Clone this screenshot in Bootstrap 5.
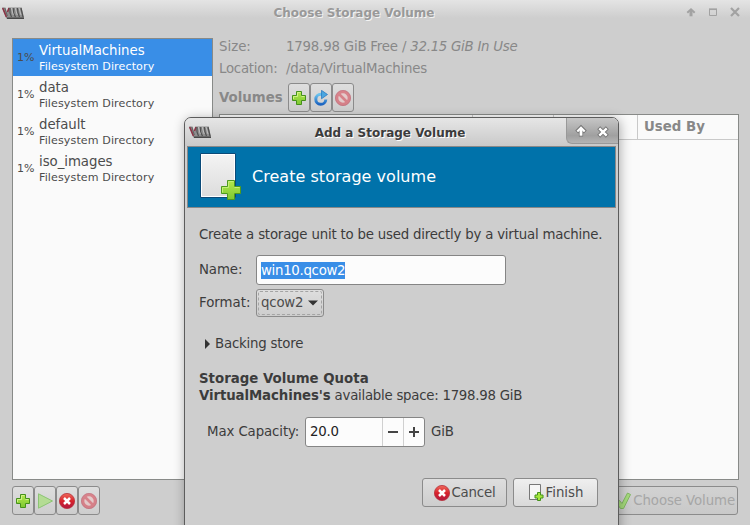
<!DOCTYPE html>
<html lang="en">
<head>
<meta charset="utf-8">
<title>Choose Storage Volume</title>
<meta name="viewport" content="width=device-width, initial-scale=1">
<link href="https://cdn.jsdelivr.net/npm/bootstrap@5.3.0/dist/css/bootstrap.min.css" rel="stylesheet">
<style>
body{font-family:"DejaVu Sans",sans-serif;font-size:13.333px;line-height:16px;background:#cecece;color:#3c3c3c;width:750px;height:525px;overflow:hidden;position:relative;white-space:nowrap}
svg{display:block;flex:none}
.main-win{height:525px;color:#888}
.main-title{height:26px;background:linear-gradient(#e4e4e4,#cecece 18px);color:#999;text-shadow:1px 1px 0 #f4f4f4}
.title-text{font-weight:bold;font-size:12px}
.main-title .title-text{padding-right:4px}
.dlg-title .title-text{padding:2px 0 0 3px}
.workspace{padding:12px 11px 0 12px;height:455px;gap:6px}
.pool-box{width:201px;border:1px solid #888a88;background:#fafafa;color:#4c4c4c;flex:none;height:442px}
.pool-box .pool-item{height:37px;padding:0 0 0 4px;border:0;border-radius:0;background:none;color:inherit}
.pool-box .pool-item.active{background:#398ee7;color:#fff;margin:0}
.pct{font-size:11px;width:22px;color:#4c4c4c}
.pool-sub{font-size:11.1px;line-height:14px;letter-spacing:.1px}
.pool-item .pool-name{line-height:18px;letter-spacing:-.05px}
.info-col{padding-top:1px}
.info-row{margin-bottom:6px}
.info-key{width:67px;flex:none}
.vol-label{width:69px}
.t1{letter-spacing:-.1px}
.t2{letter-spacing:-.2px}
.t3{letter-spacing:-.26px}
.tool-btn,.ui-btn{border:1px solid #8b8b8b;border-radius:3px;background:linear-gradient(#dedede,#cdcdcd);padding:0;color:#4c4c4c}
.tool-btn{width:22px;height:29px}
.vol-table{border:1px solid #888a88;background:#fafafa;height:366px;margin-top:2px}
.vol-head{height:25px;border-bottom:1px solid #c9c9c9}
.vol-head div{border-right:1px solid #c9c9c9;flex:none}
.col-a{width:253px}.col-b{width:81px}.col-c{width:84px}
.vol-head .last-col{border:0;padding-left:6px;line-height:24px;font-weight:bold}
.foot{padding:5px 12px 0 12px}
.ui-btn{height:29px;font-size:13.333px;line-height:16px}
.choose{width:138px;color:#a6a6a6;padding-right:2px;background:linear-gradient(#d2d2d2,#c9c9c9)}
.choose svg{margin-right:1px}
.dialog-win{position:absolute;left:184px;top:117px;width:435px;height:420px;border:1px solid #5c5c5c;border-radius:7px 7px 0 0;background:#cecece;box-shadow:1px 2px 12px rgba(0,0,0,.32)}
.dlg-title{height:28px;background:linear-gradient(#e6e6e6,#c9c9c9);border-radius:6px 6px 0 0;text-shadow:1px 1px 0 #fff;padding-left:4px}
.dlg-ctl{width:52px;height:26px;background:linear-gradient(#c6c6c6,#a0a0a0 70%,#b4b4b4);border:1px solid #999;border-width:0 0 1px 1px;border-radius:0 6px 0 6px}
.banner{height:62px;margin:0 2px;border:1px solid #888;background:#0072aa;color:#fff;font-size:16px;padding-left:10px}
.banner span{letter-spacing:.03px}
.dlg-body{padding:19px 14px 0 14px}
.field-key{width:57px;flex:none}
.row-name{margin-top:12px}
.row-format{margin-top:4px}
.row-backing{margin:19px 0 0 6px}
.row-cap{margin:13px 0 0 8px}
.cap-key{width:98px}
.unit{margin-left:6px}
.entry{border:1px solid #858585;border-radius:3px;background:#fcfcfc;height:30px;padding:0 4px}
.name-entry{width:250px}
.sel{background:#398ee7;color:#fff;line-height:17px;letter-spacing:-.3px}
.format{width:68px;height:28px;padding:1px}
.format .inner{border:1px dashed #a4a4a4;height:100%;width:100%;padding:0 3px 0 2px;border-radius:2px}
.quota{line-height:17px;margin-top:18px}
.spin{width:120px;padding:0 0 0 4px;color:#222}
.spin-btn{width:21px;height:28px;border-left:1px solid #d0d0d0}
.dlg-foot{gap:6px;margin-top:31px;padding-right:6px}
.dlg-foot .ui-btn{width:85px}
.dlg-foot span{margin-left:2px}
.dlg-foot .finish{background:linear-gradient(#efefef,#d9d9d9)}
</style>
<script src="https://cdn.jsdelivr.net/npm/bootstrap@5.3.0/dist/js/bootstrap.bundle.min.js"></script>
</head>
<body>
<svg width="0" height="0" class="position-absolute">
<defs>
<linearGradient id="gG" x1="0" y1="0" x2="0" y2="1"><stop offset="0" stop-color="#b4e84c"/><stop offset="1" stop-color="#7cc832"/></linearGradient>
<linearGradient id="gR" x1="0" y1="0" x2="0" y2="1"><stop offset="0" stop-color="#ee6a5c"/><stop offset=".5" stop-color="#d8232c"/><stop offset="1" stop-color="#b01840"/></linearGradient>
<linearGradient id="gP" x1="0" y1="0" x2="0" y2="1"><stop offset="0" stop-color="#f4f4f4"/><stop offset="1" stop-color="#dcdcdc"/></linearGradient>
<linearGradient id="gB" x1="0" y1="0" x2="0" y2="1"><stop offset="0" stop-color="#6cc4ee"/><stop offset="1" stop-color="#1c64c0"/></linearGradient>
<symbol id="plus" viewBox="0 0 16 16"><path d="M5.500 1.500h5v4h4v5h-4v4h-5v-4h-4v-5h4z" fill="url(#gG)" stroke="#45901c"/><path d="M6.500 6.500v-4h3M2.500 9V6.500h4M10.500 6.500h3" fill="none" stroke="#d4f48c" stroke-width=".9"/></symbol>
<symbol id="stop" viewBox="0 0 16 16"><circle cx="8" cy="8" r="7.600" fill="url(#gR)" stroke="#b8303a" stroke-width=".8"/><path d="M5 5l6 6M11 5l-6 6" stroke="#fff" stroke-width="2.500"/></symbol>
<symbol id="ban" viewBox="0 0 16 16"><g opacity=".5"><circle cx="8" cy="8" r="6.200" fill="#f2c0c0" stroke="#d83040" stroke-width="3"/><path d="M4 4l8 8" stroke="#d83040" stroke-width="2.600"/><circle cx="8" cy="8" r="7.600" fill="none" stroke="#b01830" stroke-width=".8"/></g></symbol>
<symbol id="vmm" viewBox="0 0 22 12"><path d="M4 9.500h18V12H5z" fill="#484848"/><path d="M0 .5h3.500L5 5.500L6.500.5h13l2.500 10H4z" fill="#8e8e8e"/><path d="M.7 1L4.400 10M7 1L5.500 5" fill="none" stroke="#8c3446" stroke-width="1.600"/><path d="M2.800 1l2.600 8" stroke="#555" stroke-width=".8"/><path d="M8 1v5l1.500 4M11.800 1l-.3 5l2 4M15.500 1l.5 5l1.500 4M19 1l2 9" fill="none" stroke="#505050" stroke-width="1.200"/><path d="M9.300 1l2 7M13.200 1l2 7M17 1l2 7" stroke="#c4c4c4" stroke-width=".9"/></symbol>
</defs>
</svg>

<main class="main-win">
  <header class="main-title d-flex align-items-center">
    <svg width="24" height="12" viewBox="-2 0 24 12"><use href="#vmm" width="22" height="12"/></svg>
    <span class="title-text flex-grow-1 text-center">Choose Storage Volume</span>
    <svg width="62" height="26" viewBox="688 0 62 26" overflow="visible" fill="none" stroke="#a2a2a2"><path d="M687.300 12.800L691 9.300l3.700 3.500" stroke-width="2"/><path d="M691 10v6.300" stroke-width="3"/><path d="M709.500 9v6.500h7V9"/><path d="M709 9.200h8" stroke-width="1.700"/><path d="M731 8l8 8M739 8l-8 8" stroke-width="2.200"/></svg>
  </header>

  <section class="workspace d-flex">
    <div class="pool-box list-group rounded-0">
      <div class="list-group-item pool-item active d-flex align-items-center"><span class="pct">1%</span><div><div class="pool-name">VirtualMachines</div><div class="pool-sub">Filesystem Directory</div></div></div>
      <div class="list-group-item pool-item d-flex align-items-center"><span class="pct">1%</span><div><div class="pool-name">data</div><div class="pool-sub">Filesystem Directory</div></div></div>
      <div class="list-group-item pool-item d-flex align-items-center"><span class="pct">1%</span><div><div class="pool-name">default</div><div class="pool-sub">Filesystem Directory</div></div></div>
      <div class="list-group-item pool-item d-flex align-items-center"><span class="pct">1%</span><div><div class="pool-name">iso_images</div><div class="pool-sub">Filesystem Directory</div></div></div>
    </div>
    <div class="info-col flex-grow-1">
      <div class="info-row d-flex"><span class="info-key">Size:</span><span class="t2">1798.98 GiB Free / <em class="t3">32.15 GiB In Use</em></span></div>
      <div class="info-row d-flex"><span class="info-key t3">Location:</span><span class="t2">/data/VirtualMachines</span></div>
      <div class="d-flex align-items-center">
        <b class="vol-label">Volumes</b>
        <button class="tool-btn d-flex align-items-center justify-content-center"><svg width="16" height="16"><use href="#plus"/></svg></button>
        <button class="tool-btn d-flex align-items-center justify-content-center"><svg width="16" height="16" viewBox="0 0 16 16"><path d="M12.800 9.500A5 5 0 1 1 8 4.300H9.500" fill="none" stroke="url(#gB)" stroke-width="3"/><path d="M8.500 .3L14.500 4.500L8.500 8.800Z" fill="#4aa6e0" stroke="#2272bc" stroke-width=".7"/></svg></button>
        <button class="tool-btn d-flex align-items-center justify-content-center"><svg width="16" height="16"><use href="#ban"/></svg></button>
      </div>
      <div class="vol-table">
        <div class="vol-head d-flex"><div class="col-a"></div><div class="col-b"></div><div class="col-c"></div><div class="last-col">Used By</div></div>
      </div>
    </div>
  </section>

  <footer class="foot d-flex">
    <button class="tool-btn d-flex align-items-center justify-content-center"><svg width="16" height="16"><use href="#plus"/></svg></button>
    <button class="tool-btn d-flex align-items-center justify-content-center"><svg width="16" height="16" viewBox="0 0 16 16"><path d="M1.500 .8L15.500 8L1.500 15.200Z" fill="#b4dc94" stroke="#8cc474"/></svg></button>
    <button class="tool-btn d-flex align-items-center justify-content-center"><svg width="16" height="16"><use href="#stop"/></svg></button>
    <button class="tool-btn d-flex align-items-center justify-content-center"><svg width="16" height="16"><use href="#ban"/></svg></button>
    <button class="ui-btn choose ms-auto d-flex align-items-center justify-content-end"><svg width="17" height="18" viewBox="0 0 17 18"><path d="M1.500 11L4.500 8.500L7 11.500L12.500 1L15.500 2.500L8.500 16.500H5.500Z" fill="#a6dc7c" stroke="#84b864"/></svg><span class="t1">Choose Volume</span></button>
  </footer>
</main>

<section class="dialog-win">
  <header class="dlg-title d-flex">
    <svg class="align-self-center" width="22" height="12"><use href="#vmm"/></svg>
    <span class="title-text flex-grow-1 text-center align-self-center">Add a Storage Volume</span>
    <div class="dlg-ctl"><svg width="51" height="25" viewBox="0 0 51 25" fill="none"><path d="M9.700 14L14 9.700l4.300 4.300M14 10v8.500" stroke="#747474" stroke-width="4.200"/><path d="M10.300 13.500L14 9.800l3.700 3.700" stroke="#fff" stroke-width="2.200"/><path d="M14 10v7.700" stroke="#fff" stroke-width="2.800"/><path d="M31.700 9.700l8.600 8.600M40.300 9.700l-8.600 8.600" stroke="#747474" stroke-width="4.200"/><path d="M32.300 10.300l7.400 7.400M39.700 10.300l-7.400 7.400" stroke="#fff" stroke-width="2.400"/></svg></div>
  </header>
  <div class="banner d-flex align-items-center">
    <svg width="54" height="60" viewBox="198 147 54 60"><path d="M200.500 153.500h35v44h-35z" fill="url(#gP)" stroke="#0a4a78"/><path d="M201.500 154.500h33v42h-33z" fill="none" stroke="#fff"/><path d="M227.500 180.500h7v6h6v7h-6v6h-7v-6h-6v-7h6z" fill="url(#gG)" stroke="#4e9a1e"/><path d="M228.500 187.500V181.500h5M222.500 192.500V187.500h6M234.500 187.500h5" fill="none" stroke="#c4f078"/></svg>
    <span>Create storage volume</span>
  </div>
  <div class="dlg-body">
    <div class="t2">Create a storage unit to be used directly by a virtual machine.</div>
    <div class="row-name d-flex align-items-center"><span class="field-key t1">Name:</span><div class="entry name-entry d-flex align-items-center"><span class="sel">win10.qcow2</span></div></div>
    <div class="row-format d-flex align-items-center"><span class="field-key">Format:</span><button class="ui-btn format"><span class="inner d-flex align-items-center justify-content-between"><span class="t2">qcow2</span><svg width="10" height="6"><path d="M0 .5h10L5 5.500z" fill="#333"/></svg></span></button></div>
    <div class="row-backing d-flex align-items-center"><svg width="10" height="10"><path d="M0 0l5 5l-5 5z" fill="#333"/></svg><span class="t2">Backing store</span></div>
    <div class="quota"><b>Storage Volume Quota</b><br><b class="t1">VirtualMachines's</b><span class="t3"> available space: 1798.98 GiB</span></div>
    <div class="row-cap d-flex align-items-center"><span class="cap-key t1">Max Capacity:</span>
      <div class="entry spin d-flex align-items-center"><span class="flex-grow-1 t2">20.0</span><span class="spin-btn"><svg width="20" height="28"><path d="M5 14h10" stroke="#444" stroke-width="2"/></svg></span><span class="spin-btn"><svg width="20" height="28"><path d="M5 14h10M10 9v10" stroke="#444" stroke-width="2"/></svg></span></div>
      <span class="unit t1">GiB</span></div>
    <div class="dlg-foot d-flex justify-content-end">
      <button class="ui-btn d-flex align-items-center justify-content-center"><svg width="16" height="16"><use href="#stop"/></svg><span class="t2">Cancel</span></button>
      <button class="ui-btn finish d-flex align-items-center justify-content-center"><svg width="16" height="17" viewBox="0 0 16 17"><path d="M1.500.5h11v15h-11z" fill="#f6f6f6" stroke="#777"/><path d="M9.500 8.500h3v2.500h2.500v3h-2.500v2.500h-3v-2.500H7v-3h2.500z" fill="#a4e63c" stroke="#45901c"/></svg><span>Finish</span></button>
    </div>
  </div>
</section>
</body>
</html>
